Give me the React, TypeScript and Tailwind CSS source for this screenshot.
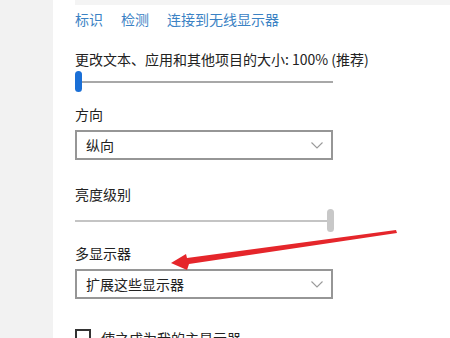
import React from 'react'

const Chevron = () => (
  <svg width="12" height="7" viewBox="0 0 12 7" className="text-[#9a9a9a]">
    <path d="M0.5 0.5 L6 6 L11.5 0.5" fill="none" stroke="currentColor" strokeWidth="1.1" />
  </svg>
)

const Dropdown = ({ value }: { value: string }) => (
  <div className="w-[258px] h-[30px] border-2 border-[#969696] flex items-center justify-between pl-[9px] pr-[8px] text-[14px] text-[#222]">
    <span>{value}</span>
    <Chevron />
  </div>
)

const Label = ({ children, className = '' }: { children: React.ReactNode; className?: string }) => (
  <div className={`text-[14px] leading-[20px] text-[#222] ${className}`}>{children}</div>
)

export default function App() {
  return (
    <div
      className="relative w-[450px] h-[338px] overflow-hidden bg-white flex"
      style={{ fontFamily: '"Noto Sans CJK SC", "Noto Sans", sans-serif' }}
    >
      <div className="w-[53px] shrink-0 bg-[#f2f2f2]" />

      <div className="flex-1 pl-[22px]">
        <div className="h-[5px] bg-[#f4f4f4]" />

        <div className="mt-[4px] flex gap-[18px] text-[14px] leading-[20px] text-[#3b82c4]">
          <span>标识</span>
          <span>检测</span>
          <span>连接到无线显示器</span>
        </div>

        <Label className="mt-[20px]">更改文本、应用和其他项目的大小: 100% (推荐)</Label>

        {/* scale slider */}
        <div className="mt-[2px] w-[258px] h-[21px] flex items-center">
          <div className="w-[7px] h-[21px] rounded-full bg-[#1a6fd6] shrink-0" />
          <div className="flex-1 h-[2px] bg-[#a8a8a8]" />
        </div>

        <Label className="mt-[12px]">方向</Label>
        <div className="mt-[6px]">
          <Dropdown value="纵向" />
        </div>

        <Label className="mt-[24px]">亮度级别</Label>

        {/* brightness slider */}
        <div className="mt-[5px] w-[259px] h-[23px] flex items-center">
          <div className="flex-1 h-[2px] bg-[#c4c4c4]" />
          <div className="w-[7px] h-[23px] rounded-full bg-[#c8c8c8] shrink-0" />
        </div>

        <Label className="mt-[11px]">多显示器</Label>
        <div className="mt-[6px]">
          <Dropdown value="扩展这些显示器" />
        </div>

        <div className="mt-[30px] flex items-start gap-[10px]">
          <div className="w-[16px] h-[16px] border-2 border-[#333] shrink-0" />
          <span className="text-[14px] leading-[20px] text-[#222] -mt-[1px]">使之成为我的主显示器</span>
        </div>
      </div>

      {/* red annotation arrow */}
      <svg className="absolute left-0 top-0 pointer-events-none" width="450" height="338">
        <polygon
          points="171,263 186,254 187,258 396,230 397,233 189,264 187,270"
          fill="#e5262b"
        />
      </svg>
    </div>
  )
}
